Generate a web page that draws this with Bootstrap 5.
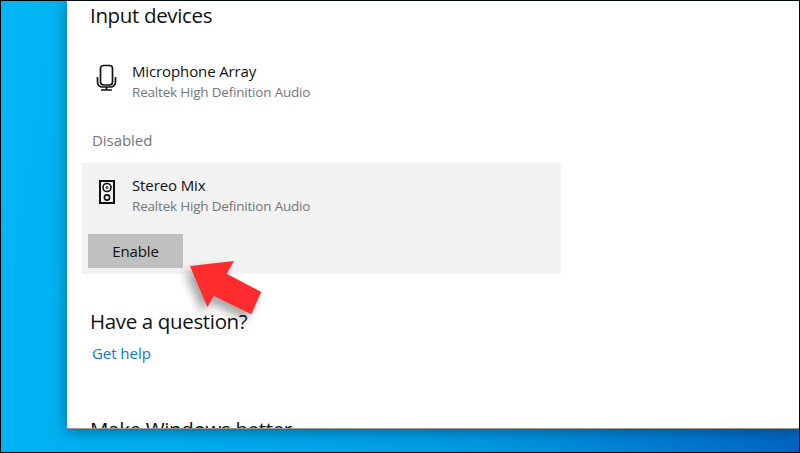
<!DOCTYPE html>
<html lang="en">
<head>
    <meta charset="UTF-8">
    <meta name="viewport" content="width=device-width, initial-scale=1.0">
    <title>Sound settings</title>
    <link href="https://cdn.jsdelivr.net/npm/bootstrap@5.3.0/dist/css/bootstrap.min.css" rel="stylesheet">
    <style>
        html, body {
            height: 100%;
        }

        body {
            background: #000;
            overflow: hidden;
            font-family: "Open Sans", "Liberation Sans", sans-serif;
        }

        /* 1px black frame round the shot */
        .desktop {
            width: 798px;
            height: 451px;
            margin: 1px 0 0 1px;
            background: linear-gradient(100deg, #00b6f5 0%, #00aeee 30%, #0098e0 65%, #0066c2 100%);
        }

        .settings-win {
            width: 732px;
            height: 428px;
            margin-left: 66px;
            padding-left: 15px;
            background: #fff;
            border-bottom: 1px solid #9a9a9a;
            box-shadow: 0 2px 14px rgba(0, 40, 80, .55);
            overflow: hidden;
            position: relative;
        }

        .sec-title {
            font-size: 20.5px;
            line-height: 28px;
            color: #111;
            margin: 0;
            letter-spacing: -.35px;
            padding-left: 8px;
        }

        .dev-row {
            gap: 13px;
            padding-left: 13px;
        }

        .dev-icon {
            width: 24px;
            height: 30px;
            flex: none;
        }

        .dev-name {
            font-size: 15px;
            line-height: 18px;
            margin-bottom: 2px;
            color: #111;
            letter-spacing: -.12px;
        }

        .dev-sub {
            font-size: 13.5px;
            line-height: 20px;
            color: #767676;
            letter-spacing: -.2px;
        }

        .first-row {
            margin-top: 33px;
        }

        .disabled-label {
            font-size: 15px;
            line-height: 18px;
            margin-top: 29px;
            color: #767676;
            padding-left: 10px;
            letter-spacing: -.05px;
        }

        .dev-panel {
            width: 479px;
            height: 111px;
            margin-top: 14px;
            padding-top: 13px;
            background: #f2f2f2;
        }

        .btn-enable {
            width: 95px;
            height: 34px;
            margin: 18px 0 0 6px;
            padding: 0;
            border: 0;
            border-radius: 0;
            background: #c0c0c0;
            color: #111;
            font-size: 15px;
            letter-spacing: -.1px;
        }

        .question-title {
            margin-top: 33px;
        }

        .help-link {
            display: block;
            font-size: 15px;
            line-height: 20px;
            color: #0a78d7;
            text-decoration: none;
            padding-left: 10px;
            margin-top: 8px;
            letter-spacing: -.05px;
        }

        .win-foot {
            margin-top: 52px;
        }

        .red-arrow {
            position: absolute;
            left: 116px;
            top: 250px;
            width: 90px;
            height: 80px;
            overflow: visible;
            filter: drop-shadow(-5px 6px 5px rgba(0, 0, 0, .35));
        }
    </style>
</head>
<body>
    <div class="desktop">
        <div class="settings-win">
            <h2 class="sec-title fw-normal">Input devices</h2>

            <div class="d-flex align-items-start dev-row first-row">
                <svg class="dev-icon" viewBox="0 0 24 30" fill="none" stroke="#111" stroke-width="1.7">
                    <rect x="5.500" y="3.500" width="12" height="19.500" rx="3"/>
                    <path d="M2.500 15v5a5 5 0 0 0 5 5h8a5 5 0 0 0 5-5v-5"/>
                    <path d="M11.500 25v3M6 28h11"/>
                </svg>
                <div>
                    <div class="dev-name">Microphone Array</div>
                    <div class="dev-sub">Realtek High Definition Audio</div>
                </div>
            </div>

            <div class="disabled-label">Disabled</div>

            <div class="dev-panel">
                <div class="d-flex align-items-start dev-row">
                    <svg class="dev-icon" viewBox="0 0 24 30" fill="none" stroke="#111">
                        <rect x="5" y="5" width="14" height="22" stroke-width="2"/>
                        <circle cx="12" cy="11.500" r="4" stroke-width="1.600"/>
                        <circle cx="12" cy="11.500" r="1" stroke-width="1"/>
                        <circle cx="12" cy="21.500" r="2.600" stroke-width="1.600"/>
                    </svg>
                    <div>
                        <div class="dev-name">Stereo Mix</div>
                        <div class="dev-sub">Realtek High Definition Audio</div>
                    </div>
                </div>
                <button type="button" class="btn btn-enable d-block">Enable</button>
            </div>

            <h2 class="sec-title fw-normal question-title">Have a question?</h2>
            <a class="help-link" href="#">Get help</a>
            <h2 class="sec-title fw-normal win-foot">Make Windows better</h2>

            <svg class="red-arrow" viewBox="0 0 90 80">
                <polygon fill="#fe2c2c" points="7,15 51,10 43.700,22.700 78.300,41 68.300,63.300 31,45 24.300,56"/>
            </svg>
        </div>
    </div>
    <script src="https://cdn.jsdelivr.net/npm/bootstrap@5.3.0/dist/js/bootstrap.bundle.min.js"></script>
</body>
</html>
